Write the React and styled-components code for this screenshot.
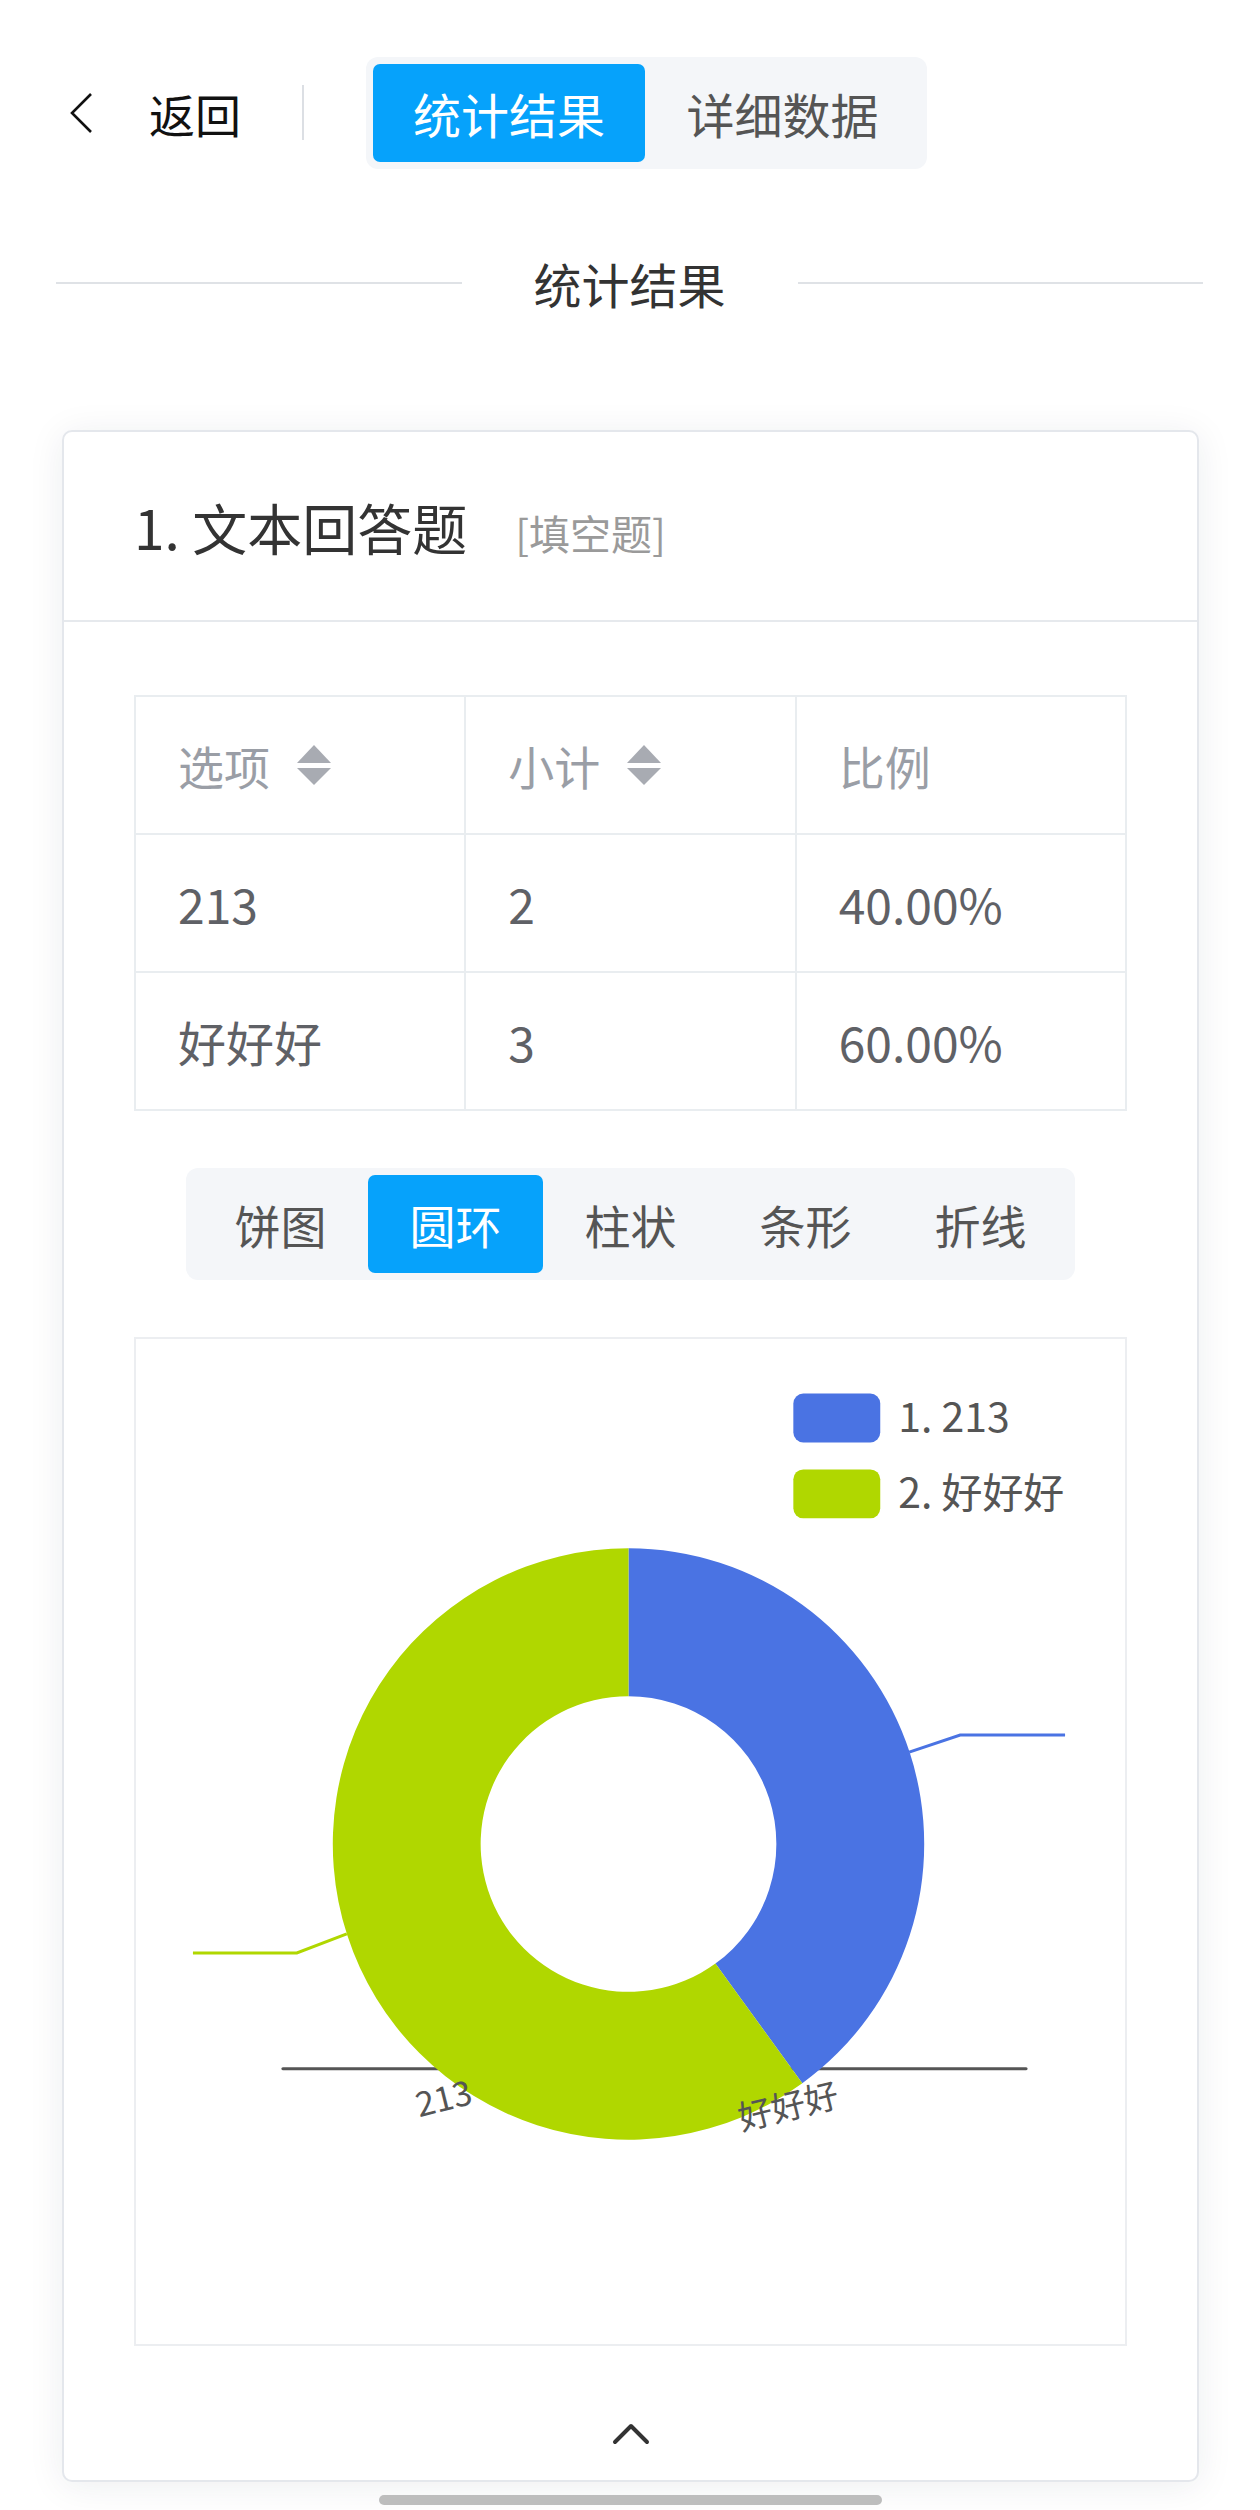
import styled, { createGlobalStyle } from "styled-components";

const GlobalStyle = createGlobalStyle`
    html, body {
        margin: 0;
        padding: 0;
        background: #fff;
    }
    body {
        font-family: "Noto Sans CJK SC", "Noto Sans", sans-serif;
        color: #333;
    }
`

const Page = styled.div`
    width: 1260px;
    height: 2510px;
    padding-top: 57px;
    box-sizing: border-box;
    overflow: hidden;
`

const Header = styled.div`
    display: flex;
    align-items: center;
    padding-left: 68px;
    height: 111px;
`

const BackButton = styled.div`
    display: flex;
    align-items: center;
    font-size: 46px;
    line-height: 1;
    color: #111;
    span {
        margin-left: 55px;
    }
`

const VLine = styled.div`
    width: 2px;
    height: 55px;
    background: #dcdfe4;
    margin-left: 61px;
`

const Segmented = styled.div`
    display: flex;
    margin-left: ${(props) => props.$ml || 0}px;
    padding: 7px;
    background: #f4f6f9;
    border-radius: 12px;
    width: fit-content;
`

const SegButton = styled.div`
    display: flex;
    align-items: center;
    justify-content: center;
    width: ${(props) => props.$w}px;
    height: ${(props) => props.$h}px;
    font-size: ${(props) => props.$fs}px;
    border-radius: 7px;
    color: ${(props) => props.$active ? "#fff" : "#555"};
    background: ${(props) => props.$active ? "#06a2fb" : "transparent"};
`

const SectionTitle = styled.div`
    display: flex;
    align-items: center;
    height: 68px;
    margin-top: 81px;
    padding: 0 57px 0 56px;
    font-size: 48px;
    color: #333;
    span {
        margin: 0 72px;
    }
`

const HLine = styled.div`
    flex: 1;
    height: 2px;
    background: #dfe2e6;
`

const Card = styled.div`
    margin: 113px 61px 0 62px;
    border: 2px solid #e4e7ec;
    border-radius: 10px;
    background: #fff;
    box-shadow: 0 4px 36px rgba(30, 40, 60, 0.08);
`

const CardHeader = styled.div`
    display: flex;
    align-items: baseline;
    height: 190px;
    box-sizing: border-box;
    padding: 58px 0 0 70px;
    border-bottom: 2px solid #e6e9ed;
`

const QTitle = styled.div`
    font-size: 55px;
    line-height: 72px;
    color: #333;
`

const QType = styled.div`
    font-size: 41px;
    color: #9a9a9a;
    margin-left: 48px;
`

const CardBody = styled.div`
    padding: 73px 70px 0;
`

const Table = styled.table`
    width: 100%;
    border-collapse: collapse;
    table-layout: fixed;
    td, th {
        height: 136px;
        border: 2px solid #e9edf0;
        padding: 0 0 0 42px;
        text-align: left;
        font-weight: 400;
    }
    th {
        font-size: 46px;
        color: #9a9ea6;
    }
    td {
        font-size: 48px;
        color: #5f6166;
    }
`

const HeadCell = styled.div`
    display: flex;
    align-items: center;
    svg {
        margin-left: 27px;
    }
`

const ChartTabsWrap = styled.div`
    display: flex;
    justify-content: center;
    margin-top: 57px;
`

const ChartBox = styled.div`
    margin-top: 57px;
    height: 1009px;
    border: 2px solid #eceef1;
    box-sizing: border-box;
    svg {
        display: block;
        width: 100%;
        height: 100%;
    }
`

const Footer = styled.div`
    display: flex;
    justify-content: center;
    height: 134px;
    padding-top: 75px;
    box-sizing: border-box;
`

const HomeBar = styled.div`
    width: 503px;
    height: 10px;
    border-radius: 5px;
    background: #bdbdbd;
    margin: 13px auto 0;
`

function SortIcon() {
    return (
        <svg width="34" height="42" viewBox="0 0 34 42">
            <polygon points="0,19 17,1 34,19" fill="#a8abb2" />
            <polygon points="0,24 34,24 17,41" fill="#a8abb2" />
        </svg>
    )
}

const rows = [
    { name: "213", count: 2, pct: "40.00%" },
    { name: "好好好", count: 3, pct: "60.00%" },
]

const chartTypes = ["饼图", "圆环", "柱状", "条形", "折线"]

const BLUE = "#4a73e3"
const GREEN = "#b0d700"

function DonutChart() {
    const cx = 629, cy = 1846, R = 296, r = 148
    const a = (144 * Math.PI) / 180
    const ox = cx + R * Math.sin(a), oy = cy - R * Math.cos(a)
    const ix = cx + r * Math.sin(a), iy = cy - r * Math.cos(a)
    const blue = `M${cx} ${cy - R} A${R} ${R} 0 0 1 ${ox} ${oy} L${ix} ${iy} A${r} ${r} 0 0 0 ${cx} ${cy - r} Z`
    const green = `M${ox} ${oy} A${R} ${R} 0 1 1 ${cx} ${cy - R} L${cx} ${cy - r} A${r} ${r} 0 1 0 ${ix} ${iy} Z`

    return (
        <svg viewBox="136 1341 990 1005">
            <line x1="283" y1="2071" x2="1027" y2="2071" stroke="#555" strokeWidth="3" strokeLinecap="round" />
            <path d={blue} fill={BLUE} />
            <path d={green} fill={GREEN} />
            <polyline points="910,1754 961,1737 1066,1737" fill="none" stroke={BLUE} strokeWidth="3" />
            <polyline points="347,1936 297,1955 193,1955" fill="none" stroke={GREEN} strokeWidth="3" />
            <g fontFamily="Noto Sans CJK SC, Noto Sans, sans-serif" fontSize="34" fill="#555">
                <text x="444" y="2113" textAnchor="middle" transform="rotate(-14 444 2101)">213</text>
                <text x="789" y="2121" textAnchor="middle" transform="rotate(-14 789 2109)">好好好</text>
            </g>
            <rect x="794" y="1395" width="87" height="49" rx="10" fill={BLUE} />
            <rect x="794" y="1471" width="87" height="49" rx="10" fill={GREEN} />
            <g fontFamily="Noto Sans CJK SC, Noto Sans, sans-serif" fontSize="41" fill="#555">
                <text x="899" y="1434">1. 213</text>
                <text x="899" y="1510">2. 好好好</text>
            </g>
        </svg>
    )
}

export default function App() {
    return (
        <Page>
            <GlobalStyle />
            <Header>
                <BackButton>
                    <svg width="26" height="42" viewBox="0 0 26 42">
                        <polyline points="23,2 4,21 23,40" fill="none" stroke="#111" strokeWidth="2.6" />
                    </svg>
                    <span>返回</span>
                </BackButton>
                <VLine />
                <Segmented $ml={62}>
                    <SegButton $active $w={272} $h={98} $fs={48}>统计结果</SegButton>
                    <SegButton $w={275} $h={98} $fs={48}>详细数据</SegButton>
                </Segmented>
            </Header>

            <SectionTitle>
                <HLine />
                <span>统计结果</span>
                <HLine />
            </SectionTitle>

            <Card>
                <CardHeader>
                    <QTitle>1. 文本回答题</QTitle>
                    <QType>[填空题]</QType>
                </CardHeader>
                <CardBody>
                    <Table>
                        <thead>
                            <tr>
                                <th><HeadCell>选项<SortIcon /></HeadCell></th>
                                <th><HeadCell>小计<SortIcon /></HeadCell></th>
                                <th>比例</th>
                            </tr>
                        </thead>
                        <tbody>
                            {rows.map((row) => (
                                <tr key={row.name}>
                                    <td>{row.name}</td>
                                    <td>{row.count}</td>
                                    <td>{row.pct}</td>
                                </tr>
                            ))}
                        </tbody>
                    </Table>

                    <ChartTabsWrap>
                        <Segmented>
                            {chartTypes.map((t) => (
                                <SegButton key={t} $active={t === "圆环"} $w={175} $h={98} $fs={46}>{t}</SegButton>
                            ))}
                        </Segmented>
                    </ChartTabsWrap>

                    <ChartBox>
                        <DonutChart />
                    </ChartBox>

                    <Footer>
                        <svg width="38" height="24" viewBox="0 0 38 24">
                            <polyline points="3,21 19,5 35,21" fill="none" stroke="#333" strokeWidth="4" strokeLinecap="round" strokeLinejoin="round" />
                        </svg>
                    </Footer>
                </CardBody>
            </Card>
            <HomeBar />
        </Page>
    )
}
